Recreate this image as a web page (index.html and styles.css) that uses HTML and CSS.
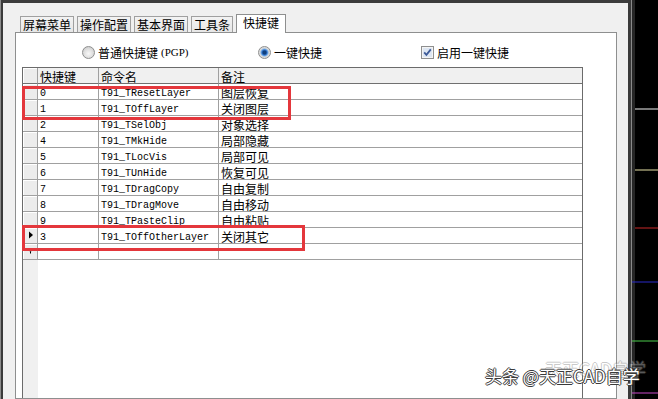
FILE: index.html
```html
<!DOCTYPE html>
<html>
	<head>
		<meta charset="utf-8">
		<title>快捷键</title>
		<link rel="stylesheet" href="styles.css">
	</head>
	<body>

		<div class="app">
			<div class="edge"></div>

			<div class="dialog">
				<div class="tabs">
					<div class="tab">屏幕菜单</div>
					<div class="tab">操作配置</div>
					<div class="tab">基本界面</div>
					<div class="tab">工具条</div>
					<div class="tab active">快捷键</div>
				</div>

				<div class="panel">
					<div class="options">
						<div class="opt"><span class="radio"></span>普通快捷键<span class="latin">(PGP)</span></div>
						<div class="opt"><span class="radio on"></span>一键快捷</div>
						<div class="opt">
							<svg class="check" width="13" height="13" viewBox="0 0 13 13">
								<rect x="0.5" y="0.5" width="12" height="12" fill="#f4f4f4" stroke="#8e8f8f"/>
								<rect x="2" y="2" width="9" height="9" fill="#dde6f2"/>
								<path d="M3.2 6.4 L5.4 8.8 L9.8 3.4" fill="none" stroke="#3d5a98" stroke-width="1.8"/>
							</svg>启用一键快捷
						</div>
					</div>

					<div class="grid">
						<div class="row head">
							<div class="ind"></div>
							<div>快捷键</div>
							<div>命令名</div>
							<div>备注</div>
						</div>
						<div class="row">
							<div class="ind"></div>
							<div class="mono">0</div>
							<div class="mono">T91_TResetLayer</div>
							<div>图层恢复</div>
						</div>
						<div class="row">
							<div class="ind"></div>
							<div class="mono">1</div>
							<div class="mono">T91_TOffLayer</div>
							<div>关闭图层</div>
						</div>
						<div class="row">
							<div class="ind"></div>
							<div class="mono">2</div>
							<div class="mono">T91_TSelObj</div>
							<div>对象选择</div>
						</div>
						<div class="row">
							<div class="ind"></div>
							<div class="mono">4</div>
							<div class="mono">T91_TMkHide</div>
							<div>局部隐藏</div>
						</div>
						<div class="row">
							<div class="ind"></div>
							<div class="mono">5</div>
							<div class="mono">T91_TLocVis</div>
							<div>局部可见</div>
						</div>
						<div class="row">
							<div class="ind"></div>
							<div class="mono">6</div>
							<div class="mono">T91_TUnHide</div>
							<div>恢复可见</div>
						</div>
						<div class="row">
							<div class="ind"></div>
							<div class="mono">7</div>
							<div class="mono">T91_TDragCopy</div>
							<div>自由复制</div>
						</div>
						<div class="row">
							<div class="ind"></div>
							<div class="mono">8</div>
							<div class="mono">T91_TDragMove</div>
							<div>自由移动</div>
						</div>
						<div class="row">
							<div class="ind"></div>
							<div class="mono">9</div>
							<div class="mono">T91_TPasteClip</div>
							<div>自由粘贴</div>
						</div>
						<div class="row">
							<div class="ind">
								<svg width="14" height="15" viewBox="0 0 14 15"><polygon points="6,3.5 10,7 6,10.5" fill="#000"/></svg>
							</div>
							<div class="mono">3</div>
							<div class="mono">T91_TOffOtherLayer</div>
							<div>关闭其它</div>
						</div>
						<div class="row">
							<div class="ind">
								<svg width="14" height="15" viewBox="0 0 14 15"><polygon points="4.5,5 10.5,5 7.5,8" fill="#000"/><rect x="7" y="8" width="1" height="1.5" fill="#000"/></svg>
							</div>
							<div></div>
							<div></div>
							<div></div>
						</div>

						<!-- red annotation boxes -->
						<div class="mark mark-a"></div>
						<div class="mark mark-b"></div>
					</div>
				</div>
			</div>

			<div class="side">
				<svg width="30" height="399" viewBox="0 0 30 399">
					<rect x="0" y="0" width="3" height="399" fill="#3a3a3a"/>
					<rect x="3" y="0" width="1" height="399" fill="#8a8a8a"/>
					<rect x="4" y="0" width="3" height="399" fill="#262626"/>
					<rect x="7" y="0" width="23" height="399" fill="#000"/>
					<rect x="7" y="108.5" width="23" height="1" fill="#f2f2f2"/>
					<rect x="7" y="169.5" width="23" height="1" fill="#e8e2a6"/>
					<rect x="7" y="227.5" width="23" height="1" fill="#c62828"/>
					<rect x="4" y="281.5" width="26" height="1" fill="#2b2bc8"/>
					<rect x="4" y="340.5" width="26" height="1" fill="#4ccc4c"/>
					<rect x="4" y="392.5" width="26" height="1" fill="#c848c8"/>
				</svg>
			</div>
		</div>

		<div class="ghost">天正CAD自学</div>
		<div class="watermark">头条 @天正CAD自学</div>

	</body>
</html>
```

FILE: styles.css
```css
body {
	margin: 0;
	width: 658px;
	height: 399px;
	overflow: hidden;
	position: relative;
	font-family: "Noto Sans CJK SC", sans-serif;
	font-size: 12px;
	color: #000;
}

.app {
	display: flex;
	height: 399px;
}

.edge {
	width: 3px;
	background: linear-gradient(to right, #8c8c8c 0 1px, #3a3a3a 1px);
}

.dialog {
	width: 625px;
	box-sizing: border-box;
	background: #f0f0f0;
	border-top: 3px solid #3c3c3c;
	padding: 11px 11px 0 12px;
	display: flex;
	flex-direction: column;
}

.side {
	width: 30px;
	line-height: 0;
}

/* tabs */

.tabs {
	display: flex;
	align-items: flex-end;
	gap: 3px;
	height: 18px;
	padding-left: 5px;
}

.tab {
	height: 16px;
	line-height: 15px;
	padding: 0 2px;
	box-sizing: border-box;
	border: 1px solid #a0a0a0;
	border-bottom: 0;
	background: linear-gradient(#f3f3f3, #e6e6e6);
	white-space: nowrap;
}

.tab.active {
	height: 19px;
	line-height: 16px;
	margin-bottom: -1px;
	padding: 0 6px;
	background: #fff;
	border-color: #8e8f8f;
	position: relative;
	z-index: 1;
}

.panel {
	flex: 1;
	background: #fff;
	border: 1px solid #8e8f8f;
	padding: 9px 0 0 6px;
	display: flex;
	flex-direction: column;
}

/* option row */

.options {
	display: grid;
	grid-template-columns: 176px 163px auto;
	align-items: center;
	height: 20px;
	padding-left: 60px;
}

.opt {
	display: flex;
	align-items: center;
	gap: 3px;
	white-space: nowrap;
}

.latin {
	font-family: "Liberation Serif", serif;
	font-size: 11px;
}

.radio {
	width: 13px;
	height: 13px;
	border-radius: 50%;
	box-sizing: border-box;
	border: 1px solid #8e8f8f;
	background: radial-gradient(circle at 50% 60%, #f8f8f8 0, #e2e2e2 45%, #c4c4c4 100%);
}

.radio.on {
	background: radial-gradient(circle at 50% 50%, #0f3f7c 0 1.5px, #2a6cc6 2.5px, #7fb4ea 3.6px, #d6d6d6 4.4px, #f2f2f2 100%);
}

/* data grid */

.grid {
	margin-top: 5px;
	width: 561px;
	flex: 1;
	box-sizing: border-box;
	border: 1px solid #6b6b6b;
	border-bottom: 0;
	position: relative;
	background: linear-gradient(to right, #f0f0f0 15px, #fff 15px);
}

.row {
	display: grid;
	grid-template-columns: 15px 61px 120px 1fr;
	height: 16px;
}

.row > div {
	box-sizing: border-box;
	border-right: 1px solid #a0a0a0;
	border-bottom: 1px solid #a0a0a0;
	line-height: 15px;
	padding: 1px 0 0 2px;
	white-space: nowrap;
	overflow: hidden;
	background: #fff;
}

.row > div:last-child {
	border-right: 0;
}

.row > .ind {
	padding: 0;
	background: #ececec;
	box-shadow: inset 1px 1px #fff;
	line-height: 0;
}

.head > div {
	background: #f0f0f0;
	border-bottom-color: #707070;
}

.row > .mono {
	font-family: "Liberation Mono", monospace;
	font-size: 10px;
	padding-top: 2px;
}

.mark {
	position: absolute;
	box-sizing: border-box;
	border: 3px solid #e4373c;
	left: -1px;
}

.mark-a {
	top: 18px;
	width: 269px;
	height: 34px;
}

.mark-b {
	top: 157px;
	width: 283px;
	height: 26px;
}

/* watermark */

.watermark, .ghost {
	position: absolute;
	font-size: 17px;
	line-height: 24px;
	white-space: nowrap;
	color: #fff;
	font-family: "Noto Sans CJK SC", sans-serif;
}

.watermark {
	left: 485px;
	top: 364px;
	text-shadow: 1px 0 #3a3a3a, -1px 0 #3a3a3a, 0 1px #3a3a3a, 0 -1px #3a3a3a;
}

.ghost {
	left: 545px;
	top: 357px;
	opacity: 0.35;
	text-shadow: 1px 0 #666, -1px 0 #666, 0 1px #666, 0 -1px #666;
}
```
